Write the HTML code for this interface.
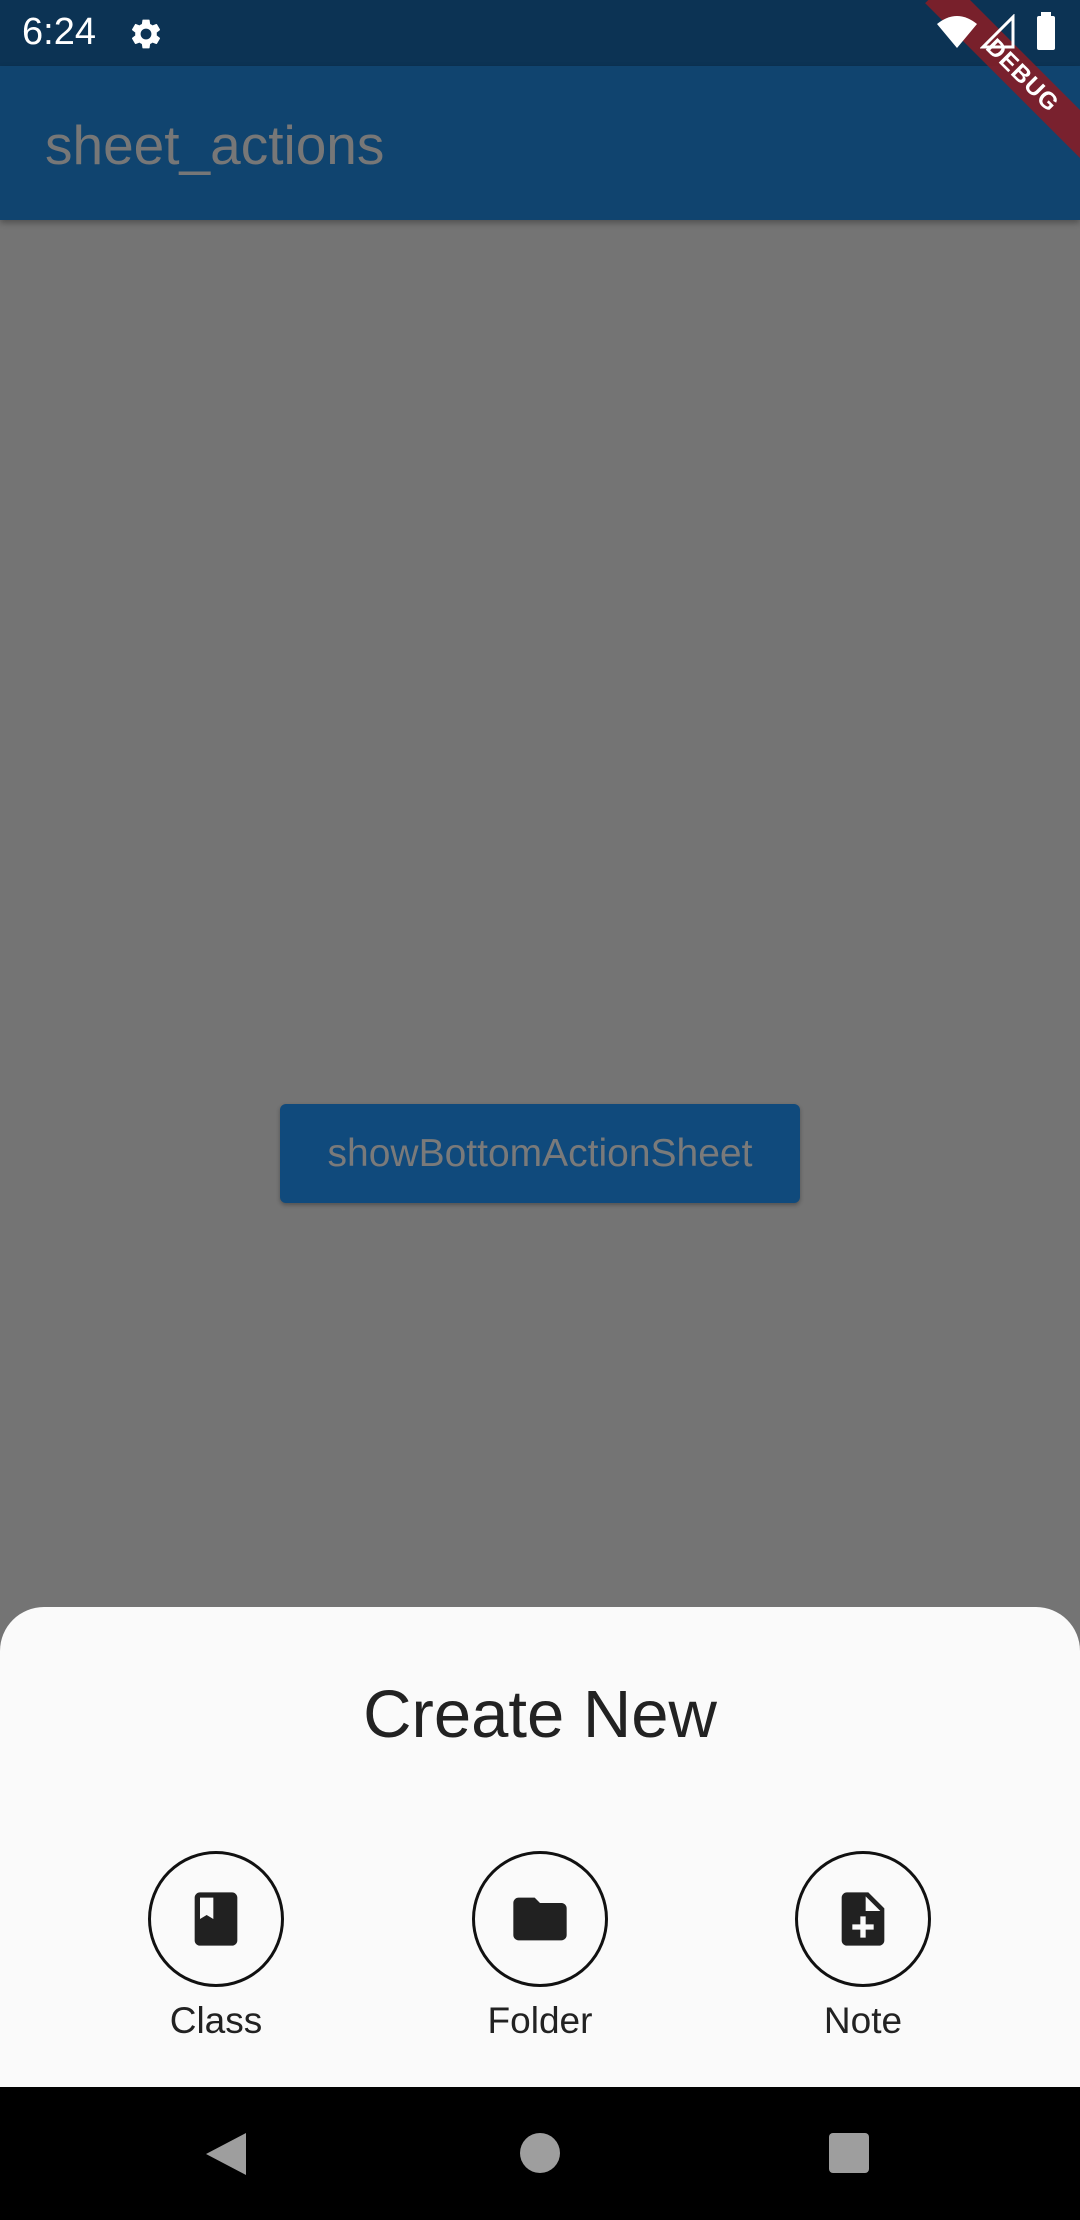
<!DOCTYPE html>
<html><head><meta charset="utf-8"><style>
*{margin:0;padding:0;box-sizing:border-box}
body{width:1080px;height:2220px;overflow:hidden;position:relative;background:#747474;font-family:"Liberation Sans",sans-serif}
.sb{position:absolute;left:0;top:0;width:1080px;height:66px;background:#0c3354;color:#fff}
.ab{position:absolute;left:0;top:66px;width:1080px;height:154px;background:#10446f;box-shadow:0 3px 6px rgba(0,0,0,.3)}
.title{position:absolute;left:45px;top:47px;font-size:55px;color:#777}
.btn{position:absolute;left:280px;top:1104px;width:520px;height:99px;background:#104a7c;border-radius:6px;box-shadow:0 2px 4px rgba(0,0,0,.3);color:#7a7a7a;font-size:39px;display:flex;align-items:center;justify-content:center}
.sheet{position:absolute;left:0;top:1607px;width:1080px;height:480px;background:#fafafa;border-radius:44px 44px 0 0}
.h{position:absolute;top:1676px;width:1080px;text-align:center;font-size:67px;color:#222}
.c{position:absolute;top:1851px;width:136px;height:136px;border:3px solid #111;border-radius:50%;display:flex;align-items:center;justify-content:center}
.l{position:absolute;top:2000px;width:200px;text-align:center;font-size:37px;color:#222}
.nav{position:absolute;left:0;top:2087px;width:1080px;height:133px;background:#000}
</style></head><body>
<div class="sb">
<div style="position:absolute;left:22px;top:11px;font-size:38px">6:24</div>
<svg style="position:absolute;left:128px;top:16px" width="36" height="36" viewBox="0 0 24 24"><path fill="#fff" d="M19.14 12.94c.04-.3.06-.61.06-.94 0-.32-.02-.64-.07-.94l2.03-1.58a.49.49 0 0 0 .12-.61l-1.92-3.32a.49.49 0 0 0-.59-.22l-2.39.96c-.5-.38-1.03-.7-1.62-.94l-.36-2.54a.48.48 0 0 0-.48-.41h-3.84c-.24 0-.43.17-.47.41l-.36 2.54c-.59.24-1.13.57-1.62.94l-2.39-.96a.48.48 0 0 0-.59.22L2.74 8.87c-.12.21-.08.47.12.61l2.03 1.58c-.05.3-.09.63-.09.94s.02.64.07.94l-2.03 1.58a.49.49 0 0 0-.12.61l1.92 3.32c.12.22.37.29.59.22l2.39-.96c.5.38 1.03.7 1.62.94l.36 2.54c.05.24.24.41.48.41h3.84c.24 0 .44-.17.47-.41l.36-2.54c.59-.24 1.13-.56 1.62-.94l2.39.96c.22.08.47 0 .59-.22l1.92-3.32c.12-.22.07-.47-.12-.61l-2.01-1.58zM12 15.6A3.6 3.6 0 1 1 12 8.4a3.6 3.6 0 0 1 0 7.2z"/></svg>
</div>
<div class="ab"><div class="title">sheet_actions</div></div>
<div style="position:absolute;right:0;top:0;width:180px;height:180px;overflow:hidden">
<div style="position:absolute;left:2px;top:59px;width:240px;height:34px;background:rgba(130,30,40,.92);transform:rotate(45deg);color:#fff;font-weight:bold;font-size:24px;text-align:center;line-height:34px;letter-spacing:1px">DEBUG</div>
</div>
<svg style="position:absolute;left:935px;top:14px" width="44" height="36" viewBox="0 0 44 36"><path fill="#fff" d="M22 34 L2 10 Q22 -6 42 10 Z"/></svg>
<svg style="position:absolute;left:980px;top:14px" width="36" height="36" viewBox="0 0 36 36"><path fill="none" stroke="#fff" stroke-width="3" d="M33 3 L33 33 L3 33 Z"/></svg>
<div style="position:absolute;left:1037px;top:16px;width:18px;height:34px;background:#fff;border-radius:2px"></div>
<div style="position:absolute;left:1041px;top:12px;width:10px;height:5px;background:#fff"></div>
<div class="btn">showBottomActionSheet</div>
<div class="sheet"></div>
<div class="h">Create New</div>
<div class="c" style="left:148px"><svg width="64" height="64" viewBox="0 0 24 24"><path fill="#212121" d="M18 2H6c-1.1 0-2 .9-2 2v16c0 1.1.9 2 2 2h12c1.1 0 2-.9 2-2V4c0-1.1-.9-2-2-2zM6 4h5v8l-2.5-1.5L6 12V4z"/></svg></div>
<div class="c" style="left:472px"><svg width="64" height="64" viewBox="0 0 24 24"><path fill="#212121" d="M10 4H4c-1.1 0-2 .9-2 2v12c0 1.1.9 2 2 2h16c1.1 0 2-.9 2-2V8c0-1.1-.9-2-2-2h-8l-2-2z"/></svg></div>
<div class="c" style="left:795px"><svg width="64" height="64" viewBox="0 0 24 24"><path fill="#212121" d="M14 2H6c-1.1 0-2 .9-2 2v16c0 1.1.9 2 2 2h12c1.1 0 2-.9 2-2V8l-6-6zm2 14h-3v3h-2v-3H8v-2h3v-3h2v3h3v2zm-3-7V3.5L18.5 9H13z"/></svg></div>
<div class="l" style="left:116px">Class</div>
<div class="l" style="left:440px">Folder</div>
<div class="l" style="left:763px">Note</div>
<div class="nav">
<svg style="position:absolute;left:204px;top:44px" width="44" height="46" viewBox="0 0 44 46"><path fill="#9e9e9e" d="M42 2 L42 44 L2 23 Z"/></svg>
<div style="position:absolute;left:520px;top:46px;width:40px;height:40px;border-radius:50%;background:#9e9e9e"></div>
<div style="position:absolute;left:829px;top:46px;width:40px;height:40px;border-radius:4px;background:#9e9e9e"></div>
</div>
</body></html>
